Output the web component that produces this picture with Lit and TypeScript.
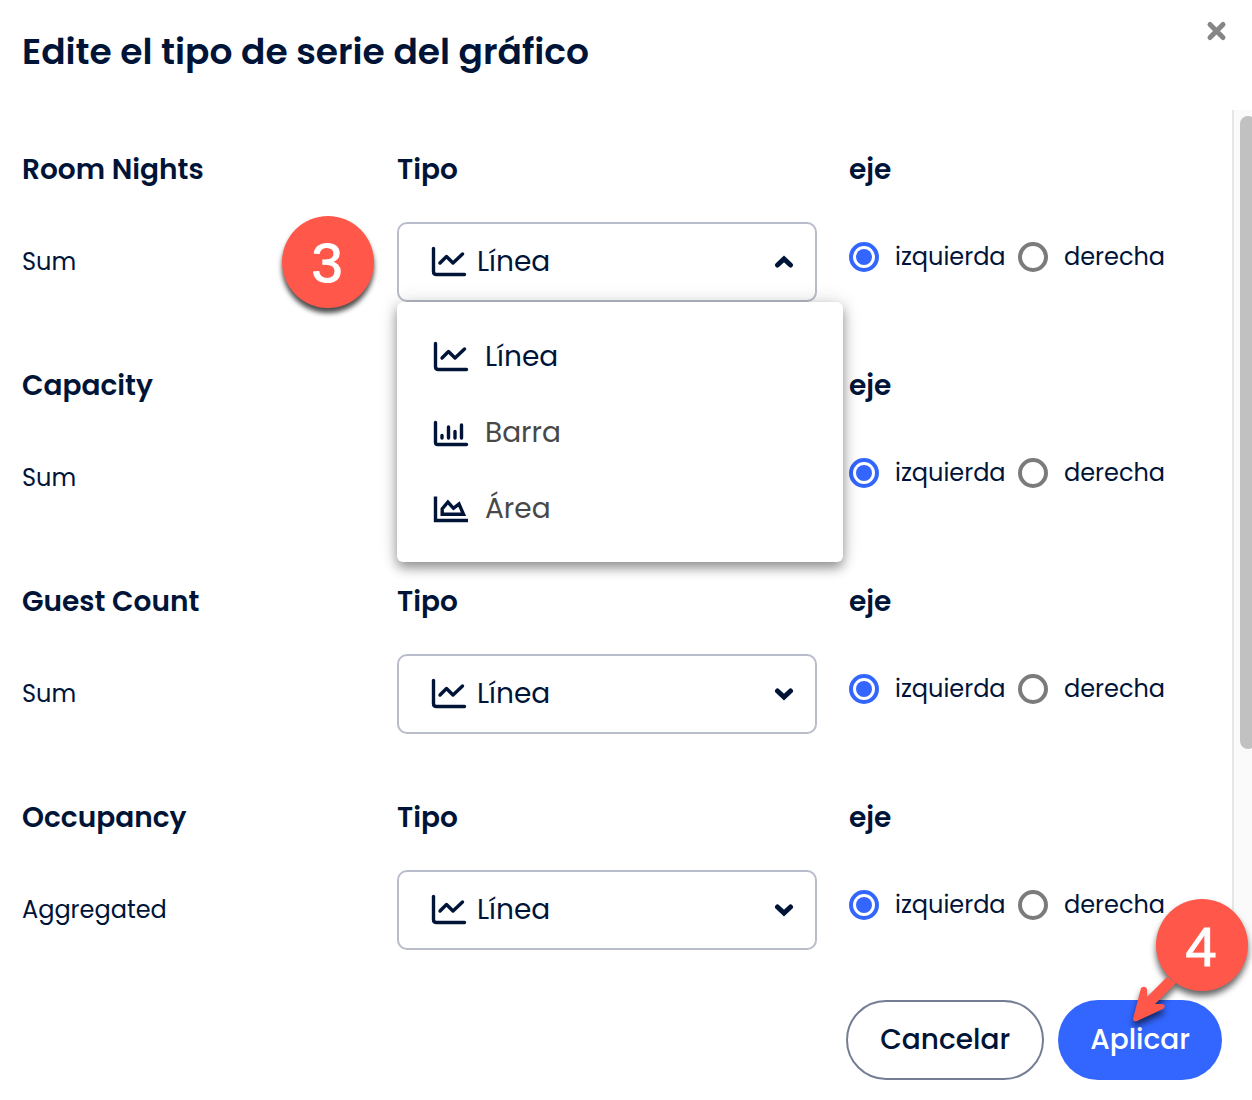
import { LitElement, html, svg, css } from "lit";
import { customElement, property } from "lit/decorators.js";

type Kind = "line" | "bar" | "area";

interface Series {
  name: string;
  aggregate: string;
  open?: boolean;
  step?: string;
}

const SERIES: Series[] = [
  { name: "Room Nights", aggregate: "Sum", open: true, step: "3" },
  { name: "Capacity", aggregate: "Sum" },
  { name: "Guest Count", aggregate: "Sum" },
  { name: "Occupancy", aggregate: "Aggregated" },
];

const KINDS: { kind: Kind; label: string }[] = [
  { kind: "line", label: "Línea" },
  { kind: "bar", label: "Barra" },
  { kind: "area", label: "Área" },
];

const SHAPES = {
  line: svg`<path d="M2.5 3.500V26.500Q2.500 29.500 5.500 29.500H33.500M9 18L15.500 11.500L22 18L31.500 9"/>`,
  bar: svg`<path d="M2.500 6.500V26.500Q2.500 28.500 4.500 28.500H33.500M9 19.500V22M15.500 11V22M22 15.500V22M28.500 9V22"/>`,
  area: svg`<path stroke-linecap="butt" stroke-linejoin="miter" d="M2.500 4.500V28.500H35M9.200 22.300V16.800L14.900 10L20.500 16.300L26 12L30.500 22.300Z"/>`,
};

const chartIcon = (kind: Kind) => html`
  <svg class="chart-icon" viewBox="0 0 36 32" width="36" height="32" stroke-linecap="round" stroke-linejoin="round" aria-hidden="true">${SHAPES[kind]}</svg>
`;

@customElement("series-row")
export class SeriesRow extends LitElement {
  @property({ attribute: false }) series!: Series;

  static styles = css`
    :host {
      display: block;
      height: 216px;
    }
    .row {
      display: grid;
      grid-template-columns: 343fr 420fr 383fr;
      column-gap: 32px;
      grid-template-rows: 40px 80px;
      row-gap: 32px;
    }
    .heading {
      margin: 0;
      font-size: 28px;
      line-height: 40px;
      font-weight: 600;
      white-space: nowrap;
    }
    .aggregate {
      margin: 0;
      font-size: 24px;
      line-height: 80px;
    }
    .field {
      position: relative;
      display: grid;
      grid-template-columns: 100%;
      align-items: center;
    }
    .field > * {
      grid-area: 1 / 1;
    }
    .select {
      appearance: none;
      box-sizing: border-box;
      width: 100%;
      height: 80px;
      margin: 0;
      padding: 0 56px 2px 78px;
      border: 2px solid #b9bdcb;
      border-radius: 10px;
      background: #fff;
      color: inherit;
      font: inherit;
      font-size: 28px;
    }
    .chart-icon {
      fill: none;
      stroke: #001438;
      stroke-width: 3.4;
      flex: none;
      pointer-events: none;
    }
    .field > .chart-icon {
      margin: 0 0 2px 34px;
      z-index: 1;
    }
    .chevron {
      fill: none;
      stroke: #001438;
      stroke-width: 5;
      stroke-linecap: round;
      pointer-events: none;
      justify-self: end;
      margin-right: 23px;
      z-index: 1;
    }
    .menu {
      position: absolute;
      z-index: 2;
      top: 80px;
      left: 0;
      right: -26px;
      box-sizing: border-box;
      margin: 0;
      padding: 16px 0;
      border-radius: 6px;
      background: #fff;
      box-shadow: 0 6px 12px rgba(0, 0, 0, 0.38), 0 0 20px rgba(0, 0, 0, 0.14);
    }
    .option {
      display: flex;
      align-items: center;
      gap: 16px;
      width: 100%;
      height: 76px;
      padding: 0 36px;
      border: 0;
      background: none;
      color: #484848;
      font: inherit;
      font-size: 28px;
      text-align: left;
    }
    .option span {
      padding-top: 2px;
    }
    .option.selected {
      color: #001438;
    }
    .step {
      position: absolute;
      z-index: 3;
      top: -6px;
      left: -115px;
      box-sizing: border-box;
      width: 92px;
      height: 92px;
      padding-right: 2px;
      border-radius: 50%;
      background: #ff584a;
      box-shadow: 0 5px 5px rgba(0, 0, 0, 0.7);
      color: #fff;
      font: 56px/94px "Liberation Sans", Arial, sans-serif;
      -webkit-text-stroke: 1px #fff;
      text-align: center;
    }
    .axis {
      display: grid;
      grid-template-columns: 156px auto;
      column-gap: 13px;
      justify-content: start;
      height: 70px;
      align-items: center;
    }
    .choice {
      display: flex;
      align-items: center;
      gap: 16px;
      font-size: 24px;
      line-height: 32px;
    }
    .radio {
      appearance: none;
      box-sizing: border-box;
      flex: none;
      display: grid;
      place-items: center;
      width: 30px;
      height: 30px;
      margin: 0;
      border: 4px solid #7b7b7b;
      border-radius: 50%;
      background: #fff;
    }
    .radio:checked {
      border-color: #3366ff;
    }
    .radio:checked::before {
      content: "";
      width: 16px;
      height: 16px;
      border-radius: 50%;
      background: #3366ff;
    }
  `;

  render() {
    const { name, aggregate, open, step } = this.series;
    return html`
      <div class="row">
        <h2 class="heading">${name}</h2>
        <h2 class="heading"><label for="kind">Tipo</label></h2>
        <h2 class="heading" id="axis">eje</h2>
        <p class="aggregate">${aggregate}</p>
        <div class="field">
          <select class="select" id="kind">
            ${KINDS.map((k) => html`<option value=${k.kind}>${k.label}</option>`)}
          </select>
          ${chartIcon("line")}
          <svg class="chevron" viewBox="0 0 20 16" width="20" height="16" aria-hidden="true">
            <path d=${open ? "M3.500 11L10 5L16.500 11" : "M3.500 5L10 11L16.500 5"} />
          </svg>
          ${open
            ? html`<div class="menu" role="listbox" aria-label="Tipo">
                ${KINDS.map(
                  (k, i) => html`<button
                    type="button"
                    role="option"
                    aria-selected=${i === 0 ? "true" : "false"}
                    class=${i === 0 ? "option selected" : "option"}
                  >${chartIcon(k.kind)}<span>${k.label}</span></button>`
                )}
              </div>`
            : null}
          ${step ? html`<span class="step">${step}</span>` : null}
        </div>
        <div class="axis" role="radiogroup" aria-labelledby="axis">
          <label class="choice"><input class="radio" type="radio" name="axis" value="left" checked />izquierda</label>
          <label class="choice"><input class="radio" type="radio" name="axis" value="right" />derecha</label>
        </div>
      </div>
    `;
  }
}

@customElement("app-root")
export class AppRoot extends LitElement {
  static styles = css`
    :host {
      display: flex;
      flex-direction: column;
      min-height: 100vh;
      background: #fff;
      color: #001438;
      font-family: Poppins, Inter, "Open Sans", sans-serif;
    }
    .header {
      display: flex;
      justify-content: space-between;
      align-items: flex-start;
      box-sizing: border-box;
      height: 110px;
      padding: 20px 23px 0 22px;
    }
    .title {
      margin: 0;
      padding-top: 8px;
      font-size: 36px;
      line-height: 48px;
      font-weight: 600;
    }
    .close {
      display: block;
      padding: 0;
      border: 0;
      background: none;
    }
    .close svg {
      display: block;
      stroke: #868686;
      stroke-width: 5;
      stroke-linecap: round;
    }
    .body {
      display: flex;
      flex: 1;
    }
    .list {
      flex: 1;
      padding: 40px 0 0 22px;
    }
    .list series-row:last-child {
      height: 162px;
    }
    .track {
      box-sizing: border-box;
      width: 20px;
      margin-bottom: 0;
      padding: 6px 0 0 6px;
      border-left: 2px solid #e6e6e6;
      background: #fafafa;
      overflow: hidden;
    }
    .thumb {
      width: 16px;
      height: 75%;
      border-radius: 8px;
      background: #c1c1c1;
    }
    .footer {
      display: flex;
      justify-content: flex-end;
      gap: 14px;
      padding: 40px 30px 20px;
    }
    .button {
      box-sizing: border-box;
      height: 80px;
      padding: 0 32px;
      border: 2px solid #737d93;
      border-radius: 40px;
      background: #fff;
      color: #001438;
      font: inherit;
      font-size: 28px;
      font-weight: 500;
    }
    .primary {
      border: 0;
      background: #3366ff;
      color: #fff;
    }
    .apply {
      position: relative;
    }
    .callout {
      position: absolute;
      right: -30px;
      top: -110px;
      pointer-events: none;
      filter: drop-shadow(0 5px 3px rgba(0, 0, 0, 0.6));
    }
    .callout text {
      font: 56px "Liberation Sans", Arial, sans-serif;
      fill: #fff;
      stroke: #fff;
      stroke-width: 1;
      text-anchor: middle;
    }
  `;

  render() {
    return html`
      <header class="header">
        <h1 class="title">Edite el tipo de serie del gráfico</h1>
        <button class="close" type="button" aria-label="Cerrar">
          <svg viewBox="0 0 24 24" width="24" height="24"><path d="M5 4.500L18 17.500M18 4.500L5 17.500" /></svg>
        </button>
      </header>
      <main class="body">
        <div class="list">${SERIES.map((s) => html`<series-row .series=${s}></series-row>`)}</div>
        <div class="track"><div class="thumb"></div></div>
      </main>
      <footer class="footer">
        <button class="button" type="button">Cancelar</button>
        <div class="apply">
          <button class="button primary" type="button">Aplicar</button>
          <svg class="callout" viewBox="0 0 132 140" width="132" height="140">
            <g fill="#ff584a">
              <path d="M47 87L27 107L27 99Q25 95 21 98L13 129Q13 132 17 131L43 119Q47 115 42 114L35 114L56 93Z" />
              <circle cx="82" cy="55" r="46" />
            </g>
            <text x="81" y="76">4</text>
          </svg>
        </div>
      </footer>
    `;
  }
}
